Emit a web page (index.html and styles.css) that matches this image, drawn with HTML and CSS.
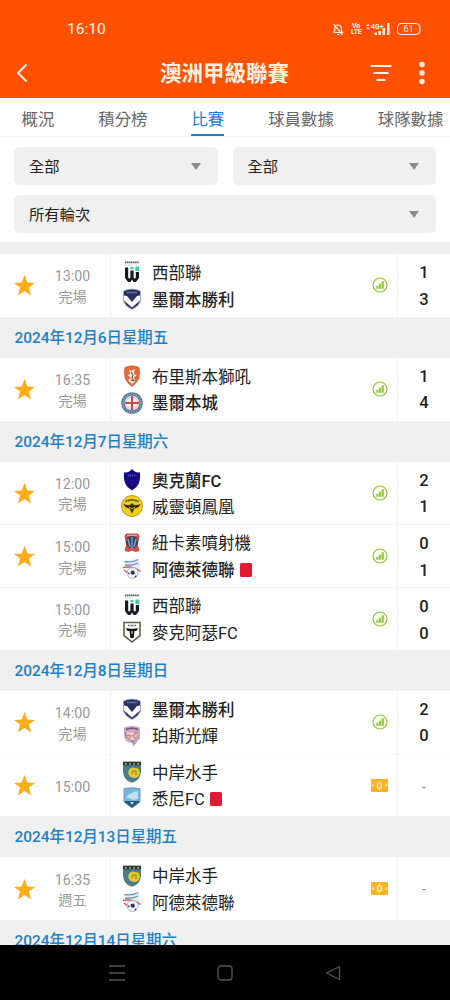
FILE: index.html
```html
<!DOCTYPE html>
<html lang="zh-Hant">
<head>
    <meta charset="UTF-8">
    <title>澳洲甲級聯賽</title>
    <link rel="stylesheet" href="styles.css">
</head>
<body>
    <!-- 圖示 -->
    <svg class="defs">
        <symbol id="star" viewBox="0 0 20 20"><path d="M10 0l2.700 7.200 7.300.3-5.800 4.500 2.100 7.500-6.300-4.300-6.300 4.300 2.100-7.500L0 7.500l7.300-.3z" fill="#ffac1c"/></symbol>
        <symbol id="stats" viewBox="0 0 16 16">
            <circle cx="8" cy="8" r="7" fill="#fbfff0" stroke="#8fc43c" stroke-width="1.2"/>
            <path d="M4.300 8.700h2.100v3H4.300zM7 6.700h2.100v5H7zM9.700 4.300h2.100v7.400H9.700z" fill="#8fc43c"/>
        </symbol>
        <symbol id="pitch" viewBox="0 0 17 13">
            <rect width="17" height="13" rx="1.2" fill="#fbb321"/>
            <path d="M8.500 1.500v10" fill="none" stroke="#fde0a0"/>
            <path d="M1.500 5.500L3 6.500l-1.500 1zM15.500 5.500L14 6.500l1.500 1z" fill="#fff0c8" stroke="#fff0c8" stroke-width=".5"/>
            <ellipse cx="8.500" cy="6.500" rx="2.200" ry="3" fill="#fbc252" stroke="#fff0c8" stroke-width="1.100"/>
        </symbol>
        <symbol id="western" viewBox="0 0 22 22">
            <path d="M4 1.400h14" stroke="#555" stroke-width="1.800" stroke-dasharray="1.400 .5"/>
            <path d="M4 4h8" stroke="#bfe9dc" stroke-width="1.200"/>
            <path d="M4 6.500V17l3 4h2.500l1.500-2.500 1.500 2.500H15l3-4V11h-3.200v5.500l-1 1.300-1.200-1.300V9.500H9.400v7l-1.200 1.300-1-1.300v-10z" fill="#151a24"/>
            <path d="M14.400 5.500H18v4.500h-3.600zM9.400 6h3.200v2.200H9.400z" fill="#45c99d"/>
        </symbol>
        <symbol id="victory" viewBox="0 0 22 22">
            <path d="M2.500 3Q11-1 19.500 3v10Q18 18 11 21.500 4 18 2.500 13z" fill="#27305f" stroke="#aab0c8" stroke-width=".8"/>
            <path d="M3 7.500l3 .5 5 6 5-6 3-.5v5L11 19.500 3 12.500z" fill="#fff"/>
            <path d="M6 4.600h10" stroke="#8088ab" stroke-width="1.500" stroke-dasharray="1.200 .5"/>
        </symbol>
        <symbol id="brisbane" viewBox="0 0 22 22">
            <path d="M4 2.500Q11-.8 18 2.500q1.500 5-.3 11.500Q15 19 11 21.500 7 19 4.300 14 2.500 7.500 4 2.500z" fill="#df6a3a" stroke="#c0502c" stroke-width=".6"/>
            <path d="M8 4l2 2 4-2-1.200 4 2.700 3-2.500 1 1 5-3 2-4-4 3-2-3.500-3 2.500-1z" fill="#f3e6dd"/>
            <path d="M10 7l2 3-1 3 2 3-3-1" fill="none" stroke="#4c4550"/>
        </symbol>
        <symbol id="city" viewBox="0 0 22 22">
            <circle cx="11" cy="11" r="10.800" fill="#5d7f9d"/>
            <circle cx="11" cy="11" r="9" fill="none" stroke="#b6c7d3" stroke-dasharray="1 1.300"/>
            <circle cx="11" cy="11" r="7.300" fill="#f3eee9"/>
            <circle cx="11" cy="11" r="6" fill="none" stroke="#b8cad6"/>
            <path d="M11 4v14M4 11h14" stroke="#d04a3c" stroke-width="2"/>
        </symbol>
        <symbol id="auckland" viewBox="0 0 22 22">
            <path d="M9 2l2-2 2 2q2 1.500 6 1.500Q20 13 15.500 18L11 21.500 6.500 18Q2 13 3 3.500 7 3.500 9 2z" fill="#160d85"/>
            <path d="M7 6.500h8" stroke="#5b59ad" stroke-width="1.500" stroke-dasharray="1.200 .7"/>
            <path d="M7 15l4 4 4-4" fill="none" stroke="#090454"/>
        </symbol>
        <symbol id="phoenix" viewBox="0 0 22 22">
            <circle cx="11" cy="11" r="10.500" fill="#f1cf1b" stroke="#9a8818" stroke-width=".8"/>
            <path d="M4.500 6.500Q11 3.500 17.500 6.500" fill="none" stroke="#51470d" stroke-width="1.800" stroke-dasharray="1.500 .5"/>
            <path d="M2.500 9q5 2 7 .5L11 8l1.500 1.500q2 1.500 7-.5-1.500 4-6 4.500L11 18.500 8.500 13.500Q4 13 2.500 9z" fill="#352f12"/>
            <path d="M8 12l3 2 3-2" fill="none" stroke="#d5b91b"/>
        </symbol>
        <symbol id="jets" viewBox="0 0 22 22">
            <path d="M5 1.500h12l1.500 2.500-1.500 9 1.500 6-4 1-3.500-1.500L7.500 20l-4-1L5 13 3.500 4z" fill="#d14e48"/>
            <path d="M6 6Q11 2 16 6l1 6-3 4H8l-3-4z" fill="#334766"/>
            <path d="M7 7l2 8M11 5v12M15 7l-2 8" stroke="#8badc8" stroke-width="1.200"/>
            <path d="M6 3.300h10" stroke="#edb3aa"/>
        </symbol>
        <symbol id="adelaide" viewBox="0 0 22 22">
            <path d="M3 3l14-2 2 4-1 10-6 6-6-4z" fill="#e5eef5"/>
            <path d="M3.500 3.500q7 1.500 14-2M4 7q8 1 13-2" fill="none" stroke="#7398bd" stroke-width="1.300"/>
            <path d="M2 9.500q10-2 17.500 4M3 12l6 5" fill="none" stroke="#dd5b58" stroke-width="1.500"/>
            <circle cx="11.500" cy="15" r="5.500" fill="#f3f7fb" stroke="#8fb0cf" stroke-width=".8"/>
            <path d="M10 13l3-.5 1 3-2 1.500-2.500-1.500zM6.500 14l2 1-.5 2zM15 17l-2 2.500 2.500-.5z" fill="#263b60"/>
        </symbol>
        <symbol id="macarthur" viewBox="0 0 22 22">
            <path d="M3 1.500h16v13L11 21 3 14.500z" fill="#fff" stroke="#655f42" stroke-width="1.600"/>
            <path d="M7 4.500h8" stroke="#666" stroke-width="1.300" stroke-dasharray="1 .4"/>
            <path d="M5 7l4 .8h4L17 7l-1.500 3h-2L12.600 17H9.400L8.500 10h-2z" fill="#14130f"/>
            <path d="M11 10v3" stroke="#fff"/>
        </symbol>
        <symbol id="perth" viewBox="0 0 22 22">
            <path d="M3 2.500Q11-.5 19 2.500v11Q16 17 12.500 21.500L11 18Q3 17 3 10z" fill="#c8a6c0"/>
            <path d="M5 4.500Q11 2 17 4.500" fill="none" stroke="#765386" stroke-width="1.600"/>
            <path d="M5 8l6-1 5 3-3 5-6 1z" fill="#e7d0cf"/>
            <path d="M6 10l4 1-2 3M16 7l-4 4 3 3M12 15l1 4" fill="none" stroke="#d28173" stroke-width="1.300"/>
            <path d="M4 7.500q2 8 8 9" fill="none" stroke="#8b70a7"/>
        </symbol>
        <symbol id="mariners" viewBox="0 0 22 22">
            <path d="M2 .8h18v10Q19 20 11 21.800 3 20 2 11z" fill="#507b82"/>
            <path d="M2 .8h18v3.500H2z" fill="#2c3537"/>
            <path d="M4 2.800h14" stroke="#c0b987" stroke-width="1.300" stroke-dasharray="2 2"/>
            <circle cx="13" cy="11.500" r="5.800" fill="#e3cb2b"/>
            <path d="M17 6.500Q6 3 5.500 12q2 7 10 6" fill="none" stroke="#4379ab" stroke-width="2"/>
            <path d="M11 13q0-4 4-3v4" fill="none" stroke="#8b8c36" stroke-width="1.200"/>
        </symbol>
        <symbol id="sydney" viewBox="0 0 22 22">
            <path d="M3 1.500Q11 0 19 1.500V15L11 21 3 15z" fill="#78b5dd" stroke="#6f96b1" stroke-width=".9"/>
            <path d="M5 10q5-5 12-6v8l-5 1z" fill="#bee0f2"/>
            <path d="M4 14h14v1.500L11 20.500 4 15.500z" fill="#25577c"/>
            <path d="M9 15l2 3 2-3z" fill="#b9ddec"/>
        </symbol>
    </svg>

    <div class="app">
        <header class="header">
            <div class="status">
                <span class="clock">16:10</span>
                <svg class="bell" viewBox="0 0 12 13" fill="none" stroke="currentColor" stroke-width="1.200"><path d="M2 9.500h8.500L9.300 7.500V5Q9 2 6 2 3 2 2.800 5v2.500L1.500 9.500M5 11.500h2.500M1.500 1l9 11"/></svg>
                <span class="volte">Vo<br>LTE</span>
                <svg class="signal" viewBox="0 0 24 14"><path d="M0 4l2-2 2 2zM0 5.500h4L2 7.500zM8.500 10.500H11V13H8.500zM12.500 9H15v4h-2.500zM16.500 6H19v7h-2.500zM21 1h2.500v12H21z" fill="currentColor"/><text x="5" y="6.500">4G+</text></svg>
                <span class="battery">61</span>
            </div>
            <div class="titlebar">
                <svg class="back" viewBox="0 0 12 20"><path d="M10.500 1.500L2 10l8.500 8.500" fill="none" stroke="currentColor" stroke-width="2"/></svg>
                <h1>澳洲甲級聯賽</h1>
                <svg class="sort" viewBox="0 0 22 18"><path d="M.5 2h21M3.500 9h15M6.500 16h9" stroke="currentColor" stroke-width="2"/></svg>
                <svg class="more" viewBox="0 0 6 24" fill="currentColor"><circle cx="3" cy="3.500" r="2.700"/><circle cx="3" cy="12" r="2.700"/><circle cx="3" cy="20.500" r="2.700"/></svg>
            </div>
        </header>

        <nav class="tabs">
            <span>概況</span>
            <span>積分榜</span>
            <span class="active">比賽</span>
            <span>球員數據</span>
            <span>球隊數據</span>
        </nav>

        <div class="filters">
            <div class="select"><span>全部</span></div>
            <div class="select"><span>全部</span></div>
            <div class="select wide"><span>所有輪次</span></div>
        </div>

        <main class="matches">
            <div class="match">
                <div class="fav"><svg><use href="#star"/></svg></div>
                <div class="time">13:00<br>完場</div>
                <div class="teams">
                    <div class="team"><svg><use href="#western"/></svg>西部聯</div>
                    <div class="team win"><svg><use href="#victory"/></svg>墨爾本勝利</div>
                </div>
                <svg class="info"><use href="#stats"/></svg>
                <div class="score">1<br>3</div>
            </div>

            <h2 class="date">2024年12月6日星期五</h2>
            <div class="match">
                <div class="fav"><svg><use href="#star"/></svg></div>
                <div class="time">16:35<br>完場</div>
                <div class="teams">
                    <div class="team"><svg><use href="#brisbane"/></svg>布里斯本獅吼</div>
                    <div class="team win"><svg><use href="#city"/></svg>墨爾本城</div>
                </div>
                <svg class="info"><use href="#stats"/></svg>
                <div class="score">1<br>4</div>
            </div>

            <h2 class="date">2024年12月7日星期六</h2>
            <div class="match">
                <div class="fav"><svg><use href="#star"/></svg></div>
                <div class="time">12:00<br>完場</div>
                <div class="teams">
                    <div class="team win"><svg><use href="#auckland"/></svg>奧克蘭FC</div>
                    <div class="team"><svg><use href="#phoenix"/></svg>威靈頓鳳凰</div>
                </div>
                <svg class="info"><use href="#stats"/></svg>
                <div class="score">2<br>1</div>
            </div>
            <div class="match">
                <div class="fav"><svg><use href="#star"/></svg></div>
                <div class="time">15:00<br>完場</div>
                <div class="teams">
                    <div class="team"><svg><use href="#jets"/></svg>紐卡素噴射機</div>
                    <div class="team win"><svg><use href="#adelaide"/></svg>阿德萊德聯<i class="red-card"></i></div>
                </div>
                <svg class="info"><use href="#stats"/></svg>
                <div class="score">0<br>1</div>
            </div>
            <div class="match">
                <div class="fav"></div>
                <div class="time">15:00<br>完場</div>
                <div class="teams">
                    <div class="team"><svg><use href="#western"/></svg>西部聯</div>
                    <div class="team"><svg><use href="#macarthur"/></svg>麥克阿瑟FC</div>
                </div>
                <svg class="info"><use href="#stats"/></svg>
                <div class="score">0<br>0</div>
            </div>

            <h2 class="date">2024年12月8日星期日</h2>
            <div class="match">
                <div class="fav"><svg><use href="#star"/></svg></div>
                <div class="time">14:00<br>完場</div>
                <div class="teams">
                    <div class="team win"><svg><use href="#victory"/></svg>墨爾本勝利</div>
                    <div class="team"><svg><use href="#perth"/></svg>珀斯光輝</div>
                </div>
                <svg class="info"><use href="#stats"/></svg>
                <div class="score">2<br>0</div>
            </div>
            <div class="match">
                <div class="fav"><svg><use href="#star"/></svg></div>
                <div class="time">15:00</div>
                <div class="teams">
                    <div class="team"><svg><use href="#mariners"/></svg>中岸水手</div>
                    <div class="team"><svg><use href="#sydney"/></svg>悉尼FC<i class="red-card"></i></div>
                </div>
                <svg class="info pitch"><use href="#pitch"/></svg>
                <div class="score none">-</div>
            </div>

            <h2 class="date">2024年12月13日星期五</h2>
            <div class="match">
                <div class="fav"><svg><use href="#star"/></svg></div>
                <div class="time">16:35<br>週五</div>
                <div class="teams">
                    <div class="team"><svg><use href="#mariners"/></svg>中岸水手</div>
                    <div class="team"><svg><use href="#adelaide"/></svg>阿德萊德聯</div>
                </div>
                <svg class="info pitch"><use href="#pitch"/></svg>
                <div class="score none">-</div>
            </div>

            <h2 class="date">2024年12月14日星期六</h2>
        </main>

        <footer class="navbar">
            <svg viewBox="0 0 16 16"><path d="M0 1h16M0 8h16M0 15h16"/></svg>
            <svg viewBox="0 0 16 16"><rect x="1" y="1" width="14" height="14" rx="3"/></svg>
            <svg viewBox="0 0 16 16"><path d="M14.500 1.500v13L1.500 8z" stroke-linejoin="round"/></svg>
        </footer>
    </div>
</body>
</html>
```
FILE: styles.css
```css
* { box-sizing: border-box; }
body {
    margin: 0;
    font-family: Roboto, "Noto Sans CJK TC", sans-serif;
    color: #222;
    background: #fff;
}
.defs { display: none; }
.app {
    display: flex;
    flex-direction: column;
    width: 450px;
    height: 1000px;
    overflow: hidden;
}

/* 頂部 */
.header {
    flex: none;
    height: 98px;
    background: #ff5100;
    color: #fff0e4;
}
.status {
    display: flex;
    align-items: center;
    height: 49px;
    padding: 9px 29px 0 67px;
}
.clock { flex: 1; font-size: 15.5px; line-height: 18px; padding-bottom: 1px; }
.bell { width: 12px; height: 13px; margin-right: 7px; }
.volte {
    width: 10px;
    margin-right: 5px;
    font-size: 7px;
    font-weight: 700;
    line-height: 6px;
    text-align: center;
    letter-spacing: -0.3px;
}
.signal { width: 24px; height: 14px; margin-right: 7px; }
.signal text { font-size: 7px; font-weight: 700; fill: currentColor; }
.battery {
    width: 23px;
    height: 12px;
    margin-right: 1px;
    border: 1.5px solid currentColor;
    border-radius: 4px;
    font-size: 9px;
    line-height: 10px;
    text-align: center;
    box-shadow: 1px 0 0 -0.5px currentColor;
}
.titlebar {
    display: flex;
    align-items: center;
    height: 49px;
    padding: 0 25px 2px 16px;
}
.back { width: 12px; height: 20px; }
.titlebar h1 {
    flex: 1;
    margin: 0;
    padding: 2px 0 0 132px;
    font-size: 21.5px;
    font-weight: 700;
    line-height: 30px;
    white-space: nowrap;
}
.sort { width: 22px; height: 18px; margin-right: 27px; }
.more { width: 6px; height: 24px; }

.tabs {
    display: flex;
    flex: none;
    gap: 44px;
    height: 39px;
    padding-left: 21.5px;
    border-bottom: 1px solid #f3f3f3;
    overflow: hidden;
    color: #666;
    font-size: 16.4px;
    line-height: 44px;
    white-space: nowrap;
}
.tabs .active {
    color: #1c7fd0;
    border-bottom: 3px solid #1c7fd0;
    height: 39px;
}

/* 篩選 */
.filters {
    display: grid;
    flex: none;
    grid-template-columns: 1fr 1fr;
    gap: 10px 15px;
    padding: 10px 14px 9px;
    border-bottom: 12px solid #f0f0f0;
}
.select {
    display: flex;
    align-items: center;
    justify-content: space-between;
    height: 38px;
    padding: 0 17px 0 15px;
    border-radius: 5px;
    background: #f0f0f0;
    font-size: 15.3px;
}
.select span { padding-bottom: 2px; }
.select::after {
    content: "";
    border: 5.5px solid transparent;
    border-top: 7px solid #8c8c8c;
    border-bottom: 0;
}
.wide { grid-column: span 2; }

/* 賽事列表 */
.matches { flex: 1; min-height: 0; overflow: hidden; }
.date {
    height: 41px;
    margin: 0;
    padding-left: 14.5px;
    background: #f0f0f0;
    color: #1c7fc8;
    font-size: 15.4px;
    font-weight: 500;
    line-height: 43px;
}
.match {
    display: flex;
    align-items: center;
    height: 62.75px;
}
.match + .match { border-top: 1px solid #f6f6f6; }
.fav { width: 35px; padding: 1px 0 0 13.5px; }
.fav svg { display: block; width: 21px; height: 21px; }
.time {
    width: 75px;
    color: #999;
    font-size: 14.2px;
    line-height: 20.5px;
    text-align: center;
    padding-top: 3px;
}
.teams {
    flex: 1;
    height: 100%;
    padding: 7px 0 0 9.5px;
    border-left: 1px solid #f0f0f0;
}
.match + .match .teams { padding-top: 6px; }
.team {
    display: flex;
    align-items: center;
    height: 26.5px;
    font-size: 16.5px;
    line-height: 26.5px;
    white-space: nowrap;
}
.team svg { width: 22px; height: 22px; margin: -4px 9.5px 0 0; }
.win { font-weight: 500; }
.red-card {
    width: 12px;
    height: 14px;
    margin: -3px 0 0 5px;
    border-radius: 1.5px;
    background: #e01b31;
}
.info { width: 16px; height: 16px; margin-right: 9px; }
.info.pitch { width: 17px; height: 13px; }
.score {
    width: 53px;
    height: 100%;
    padding-top: 6px;
    border-left: 1px solid #f4f4f4;
    font-size: 16.5px;
    font-weight: 500;
    line-height: 26.5px;
    text-align: center;
}
.score.none {
    color: #888;
    font-size: 14px;
    font-weight: 400;
    line-height: 52px;
}

.navbar {
    display: flex;
    flex: none;
    align-items: center;
    justify-content: center;
    gap: 92px;
    height: 55px;
    background: #000;
}
.navbar svg {
    width: 16px;
    height: 16px;
    fill: none;
    stroke: #555;
    stroke-width: 1.3;
}
```
